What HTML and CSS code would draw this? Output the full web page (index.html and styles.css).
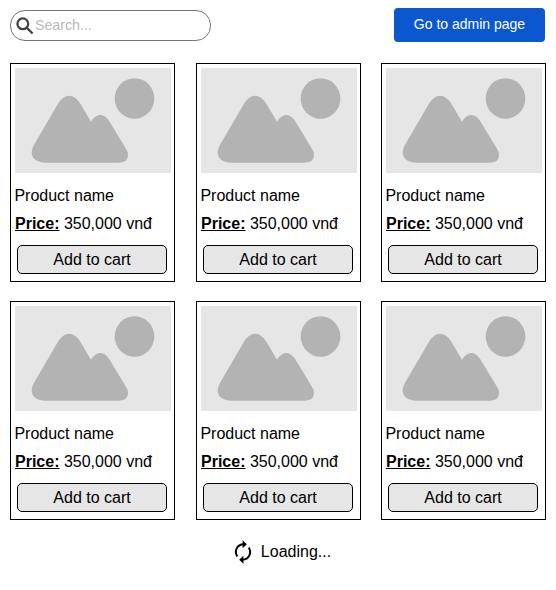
FILE: index.html
```html
<!DOCTYPE html>
<html lang="en">
<head>
<meta charset="utf-8">
<title>Products</title>
<link rel="stylesheet" href="styles.css">
</head>
<body>
<svg width="0" height="0" class="defs" aria-hidden="true">
  <symbol id="placeholder" viewBox="45 39 468 315">
    <ellipse cx="403.5" cy="130.5" rx="59.5" ry="60.5"/>
    <path d="M103 268L173 148Q188 122 207 122Q227 122 242 148L273 200Q286 180 300 180Q314 180 326 196L377 280Q384 290 384 301Q384 323 357 323H137Q95 322 95 291Q95 281 103 268Z"/>
  </symbol>
</svg>
<header class="topbar">
  <label class="search">
    <svg class="search-icon" viewBox="0 0 18 18"><circle cx="6.8" cy="6.8" r="5.4"/><path d="M10.9 10.9L16.6 16.5"/></svg>
    <input type="text" placeholder="Search...">
  </label>
  <button class="admin">Go to admin page</button>
</header>
<main class="grid">
  <article class="card"><svg class="image"><use href="#placeholder"/></svg><p class="name">Product name</p><p class="price"><b>Price:</b> 350,000 vnđ</p><button class="add">Add to cart</button></article>
  <article class="card"><svg class="image"><use href="#placeholder"/></svg><p class="name">Product name</p><p class="price"><b>Price:</b> 350,000 vnđ</p><button class="add">Add to cart</button></article>
  <article class="card"><svg class="image"><use href="#placeholder"/></svg><p class="name">Product name</p><p class="price"><b>Price:</b> 350,000 vnđ</p><button class="add">Add to cart</button></article>
  <article class="card"><svg class="image"><use href="#placeholder"/></svg><p class="name">Product name</p><p class="price"><b>Price:</b> 350,000 vnđ</p><button class="add">Add to cart</button></article>
  <article class="card"><svg class="image"><use href="#placeholder"/></svg><p class="name">Product name</p><p class="price"><b>Price:</b> 350,000 vnđ</p><button class="add">Add to cart</button></article>
  <article class="card"><svg class="image"><use href="#placeholder"/></svg><p class="name">Product name</p><p class="price"><b>Price:</b> 350,000 vnđ</p><button class="add">Add to cart</button></article>
</main>
<footer class="loading">
  <svg class="loading-icon" viewBox="0 0 18 24"><path class="arc" d="M9.5 4.3A7.6 7.6 0 0 0 3.3 16.3M8.5 19.7A7.6 7.6 0 0 0 14.7 7.7"/><path d="M8.6 0.3L12.8 4.3L8.6 8.3ZM9.4 15.7L5.2 19.7L9.4 23.7Z"/></svg>
  <span>Loading...</span>
</footer>
</body>
</html>
```
FILE: styles.css
```css
* { box-sizing: border-box; }
body { margin: 0; padding: 8px 10px 0; background: #fff; color: #000; font: 16px/18px "Liberation Sans", Arial, sans-serif; }
p { margin: 0; }
button, input { font-family: inherit; }
.defs { display: block; }
.topbar { display: flex; justify-content: space-between; height: 34px; margin-right: 1px; }
.search { display: flex; align-items: center; width: 201px; height: 31px; margin-top: 2px; padding-left: 5px; border: 1px solid #767676; border-radius: 15px; }
.search-icon { width: 18px; height: 18px; fill: none; stroke: #404040; stroke-width: 2.2; }
.search input { width: 160px; margin-left: 1px; padding: 0 0 2px; border: 0; outline: 0; background: none; font-size: 14.2px; }
.search input::placeholder { color: #b8b8b8; }
.admin { width: 151px; padding: 0 0 2px; border: 0; border-radius: 4px; background: #0b57d0; color: #fff; font-size: 14px; }
.grid { display: grid; grid-template-columns: 186px 185px 165px; row-gap: 19px; margin-top: 21px; }
.card { display: flex; flex-direction: column; width: 165px; height: 219px; padding: 4px 3px 0; border: 1px solid #000; }
.image { width: 156px; height: 105px; margin-left: 1px; background: #e6e6e6; fill: #b3b3b3; }
.name { margin-top: 14px; padding-left: 0.4px; }
.price { margin: 10px 0 0 1px; }
.price b { text-decoration: underline; }
.add { width: 150px; height: 29px; margin: 12px 0 0 3px; padding: 0; border: 1px solid #000; border-radius: 5px; background: #e6e6e6; color: #000; font-size: 16px; }
.loading { display: flex; align-items: center; justify-content: center; gap: 9px; height: 24px; margin: 20px 0 0 9px; }
.loading-icon { width: 18px; height: 24px; }
.arc { fill: none; stroke: #000; stroke-width: 2; }
```
